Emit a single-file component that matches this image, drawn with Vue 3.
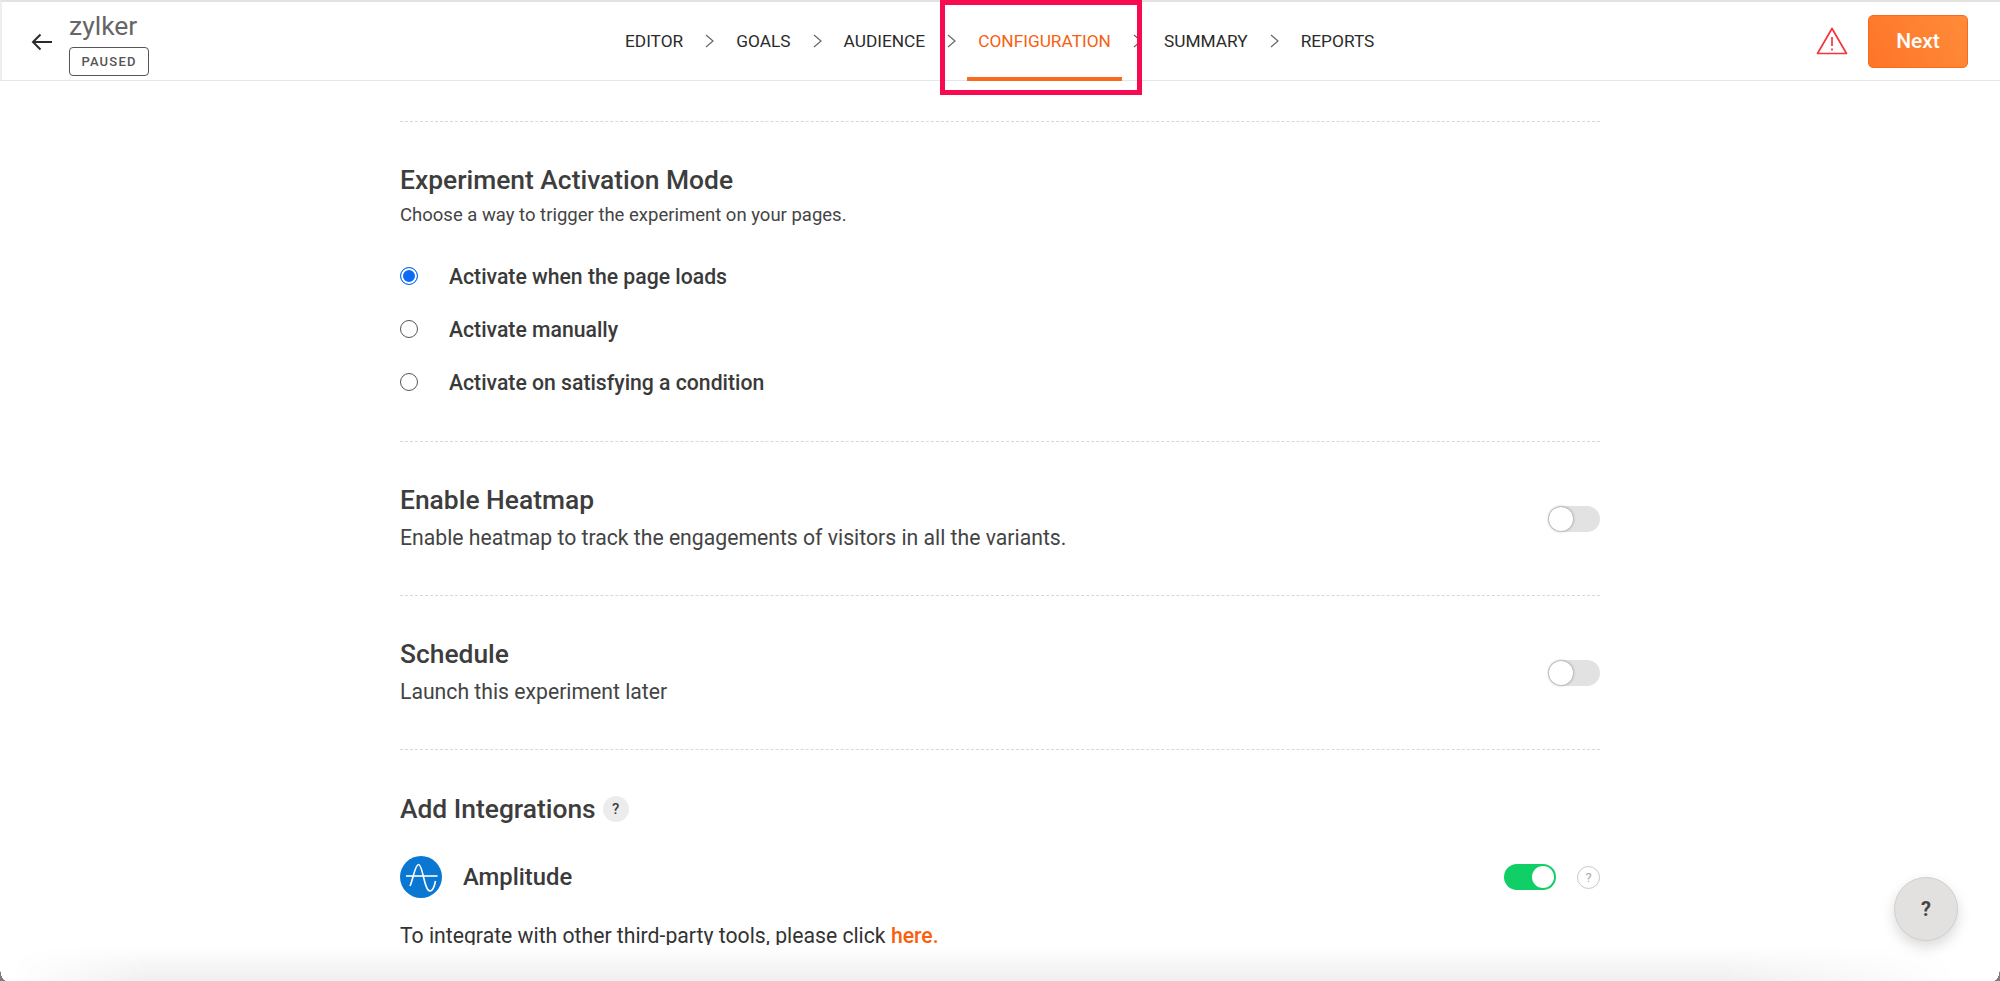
<template>
  <div class="pagina">
    <header class="topo">
      <div class="topo-esq">
        <svg class="voltar" width="22" height="18" viewBox="0 0 22 18" fill="none" stroke="#2b2b2b" stroke-width="2">
          <path d="M21 9H2M9.500 1.500 2 9l7.500 7.500" />
        </svg>
        <div class="projeto">
          <div class="nome">zylker</div>
          <span class="estado">PAUSED</span>
        </div>
      </div>
      <nav class="passos">
        <template v-for="(p, i) in passos" :key="p">
          <span class="passo" :class="{ ativo: p === 'CONFIGURATION' }">{{ p }}</span>
          <svg v-if="i < passos.length - 1" class="seta" width="9" height="14" viewBox="0 0 9 14" fill="none" stroke="#666" stroke-width="1.200">
            <path d="M1 1l7 6-7 6" />
          </svg>
        </template>
      </nav>
      <div class="topo-dir">
        <svg width="32" height="28" viewBox="0 0 32 28" fill="none" stroke="#f5333f" stroke-width="1.700" stroke-linejoin="round">
          <path d="M16 1.500 30.500 26.500H1.500Z" />
          <path d="M16 10v9M16 21.500v2" />
        </svg>
        <button class="proximo">Next</button>
      </div>
      <div class="destaque"></div>
    </header>

    <main class="conteudo">
      <section class="bloco modo">
        <h2>Experiment Activation Mode</h2>
        <p class="sub-pequeno">Choose a way to trigger the experiment on your pages.</p>
        <div class="opcoes">
          <label v-for="(o, i) in opcoes" :key="o" class="opcao">
            <span class="radio" :class="{ marcado: i === 0 }"></span>
            {{ o }}
          </label>
        </div>
      </section>

      <section class="bloco linha">
        <div>
          <h2>Enable Heatmap</h2>
          <p>Enable heatmap to track the engagements of visitors in all the variants.</p>
        </div>
        <span class="chave"></span>
      </section>

      <section class="bloco linha">
        <div>
          <h2>Schedule</h2>
          <p>Launch this experiment later</p>
        </div>
        <span class="chave"></span>
      </section>

      <section class="integracoes">
        <h2>Add Integrations <span class="ajuda-titulo">?</span></h2>
        <div class="integracao">
          <svg class="logo" width="42" height="42" viewBox="0 0 42 42">
            <circle cx="21" cy="21" r="21" fill="#0a78d2" />
            <path d="M6 20H37.500" stroke="#fff" stroke-width="1.600" fill="none" />
            <path d="M10 30C13 24 15 8.500 18.500 8.500 23 8.500 24 35 30 35 33 35 34.500 30 35.500 25" stroke="#fff" stroke-width="1.600" fill="none" />
          </svg>
          <span class="nome-int">Amplitude</span>
          <span class="chave ligada"></span>
          <span class="ajuda-int">?</span>
        </div>
        <p class="nota">To integrate with other third-party tools, please click <a>here.</a></p>
      </section>
    </main>

    <div class="sombra-base"></div>
    <button class="ajuda-flutuante">?</button>
  </div>
</template>

<script setup>
const passos = ["EDITOR", "GOALS", "AUDIENCE", "CONFIGURATION", "SUMMARY", "REPORTS"];
const opcoes = [
  "Activate when the page loads",
  "Activate manually",
  "Activate on satisfying a condition",
];
</script>

<style>
html,
body {
  margin: 0;
  overflow: hidden;
  background: #fff;
}
</style>

<style scoped>
.pagina {
  position: relative;
  height: 981px;
  overflow: hidden;
  font-family: Roboto, "Liberation Sans", sans-serif;
  color: #2e2e2e;
  background: #fff;
}
/* cantos arredondados da janela, visiveis no fundo */
.pagina::before,
.pagina::after {
  content: "";
  position: absolute;
  bottom: 0;
  width: 6px;
  height: 14px;
}
.pagina::before {
  left: 0;
  background: radial-gradient(ellipse 6px 14px at 100% 0, transparent 96%, #7d7d7d 100%);
}
.pagina::after {
  right: 0;
  background: radial-gradient(ellipse 6px 14px at 0 0, transparent 96%, #7d7d7d 100%);
}

.topo {
  position: relative;
  display: flex;
  align-items: center;
  justify-content: space-between;
  height: 78px;
  border-top: 2px solid #e2e2e2;
  border-bottom: 1px solid #e6e6e6;
  border-left: 2px solid #eee;
  padding: 0 32px 0 29px;
}
.topo-esq {
  display: flex;
  align-items: center;
  gap: 16px;
}
.voltar {
  margin-top: 2px;
}
.projeto {
  margin-top: 3px;
}
.nome {
  font-size: 26.500px;
  line-height: 32px;
  font-weight: 400;
  color: #666;
}
.estado {
  display: block;
  box-sizing: border-box;
  width: 80px;
  height: 29px;
  margin-top: 5px;
  border: 1px solid #555;
  border-radius: 4px;
  font-size: 13px;
  font-weight: 500;
  line-height: 27px;
  letter-spacing: 1.200px;
  text-align: center;
  color: #555;
}
.passos {
  position: absolute;
  left: 623px;
  top: 0;
  height: 78px;
  display: flex;
  align-items: center;
}
.passo {
  font-size: 17.300px;
  color: #2b2b2b;
}
.passo.ativo {
  position: relative;
  color: #f8600e;
}
.passo.ativo::after {
  content: "";
  position: absolute;
  left: -11px;
  right: -11px;
  top: 46px;
  height: 4px;
  background: #fa6a1e;
}
.seta {
  margin: 0 22px;
}
.topo-dir {
  display: flex;
  align-items: center;
  gap: 20px;
}
.proximo {
  width: 100px;
  height: 53px;
  border: 1px solid #fa6a1e;
  border-radius: 5px;
  background: linear-gradient(60deg, #fe7428, #ff8c38);
  color: #fff;
  font-family: inherit;
  font-size: 21px;
  font-weight: 500;
}
.destaque {
  position: absolute;
  left: 938px;
  top: -2px;
  width: 202px;
  height: 95px;
  box-sizing: border-box;
  border: 5px solid #f70a50;
}

.conteudo {
  width: 1200px;
  margin: 0 auto;
  padding-top: 40px;
}
.bloco {
  border-top: 1px dashed #d8d8d8;
}
h2 {
  margin: 0;
  font-size: 26.400px;
  line-height: 30px;
  font-weight: 500;
  color: #3d3d3d;
}
p {
  margin: 0;
  font-size: 21.200px;
  line-height: 28px;
  color: #444;
}
.modo {
  padding: 43px 0 45px;
}
.sub-pequeno {
  font-size: 18.500px;
  line-height: 24px;
  margin-top: 8px;
}
.opcoes {
  display: flex;
  flex-direction: column;
  gap: 25px;
  margin-top: 35px;
}
.opcao {
  display: flex;
  align-items: center;
  height: 28px;
  gap: 31px;
  font-size: 21.200px;
  font-weight: 500;
  color: #3a3a3a;
}
.radio {
  box-sizing: border-box;
  width: 18px;
  height: 18px;
  border: 1.500px solid #555;
  border-radius: 50%;
  margin-top: -1px;
}
.radio.marcado {
  border-color: #0b6bf5;
  background: #0b6bf5;
  box-shadow: inset 0 0 0 2px #fff;
}
.linha {
  display: flex;
  align-items: center;
  justify-content: space-between;
  height: 154px;
  box-sizing: border-box;
}
.linha p {
  margin-top: 9px;
}
.chave {
  position: relative;
  display: block;
  flex: none;
  width: 52px;
  height: 26px;
  border-radius: 13px;
  background: #e2e2e2;
}
.chave::after {
  content: "";
  position: absolute;
  left: 1px;
  top: 1px;
  width: 24px;
  height: 24px;
  border-radius: 50%;
  background: #fff;
  box-shadow: 0 0 3px rgba(0, 0, 0, 0.45);
}
.chave.ligada {
  background: #10cf67;
}
.chave.ligada::after {
  left: 28px;
  top: 2px;
  width: 22px;
  height: 22px;
  box-shadow: none;
}
.integracoes {
  border-top: 1px dashed #d8d8d8;
  padding-top: 44px;
}
.integracoes h2 {
  display: flex;
  align-items: center;
  gap: 7px;
}
.ajuda-titulo {
  width: 26px;
  height: 26px;
  border-radius: 50%;
  background: #ececec;
  font-size: 15px;
  line-height: 27px;
  text-align: center;
}
.integracao {
  display: flex;
  align-items: center;
  margin-top: 32px;
}
.nome-int {
  margin-left: 21px;
  font-size: 23.800px;
  font-weight: 500;
  color: #3a3a3a;
  flex: 1;
}
.ajuda-int {
  box-sizing: border-box;
  width: 23px;
  height: 23px;
  margin-left: 21px;
  border: 1px solid #c8c8c8;
  border-radius: 50%;
  font-size: 13px;
  line-height: 22px;
  text-align: center;
  color: #aaa;
}
.nota {
  margin-top: 24px;
  color: #333;
}
.nota a {
  color: #f8600e;
  font-weight: 500;
}

.sombra-base {
  position: absolute;
  left: 0;
  right: 0;
  bottom: 0;
  height: 36px;
  background: linear-gradient(#fff, #efefef);
  -webkit-mask-image: linear-gradient(to right, transparent 10px, #000 150px, #000 1720px, transparent 1960px);
  mask-image: linear-gradient(to right, transparent 10px, #000 150px, #000 1720px, transparent 1960px);
  pointer-events: none;
}
.ajuda-flutuante {
  position: absolute;
  left: 1894px;
  top: 877px;
  width: 64px;
  height: 64px;
  border: 1px solid #cfcfcf;
  border-radius: 50%;
  background: #e2e1df;
  box-shadow: 0 6px 14px rgba(0, 0, 0, 0.15);
  font-family: inherit;
  font-size: 20px;
  font-weight: 700;
  color: #444;
}
</style>
